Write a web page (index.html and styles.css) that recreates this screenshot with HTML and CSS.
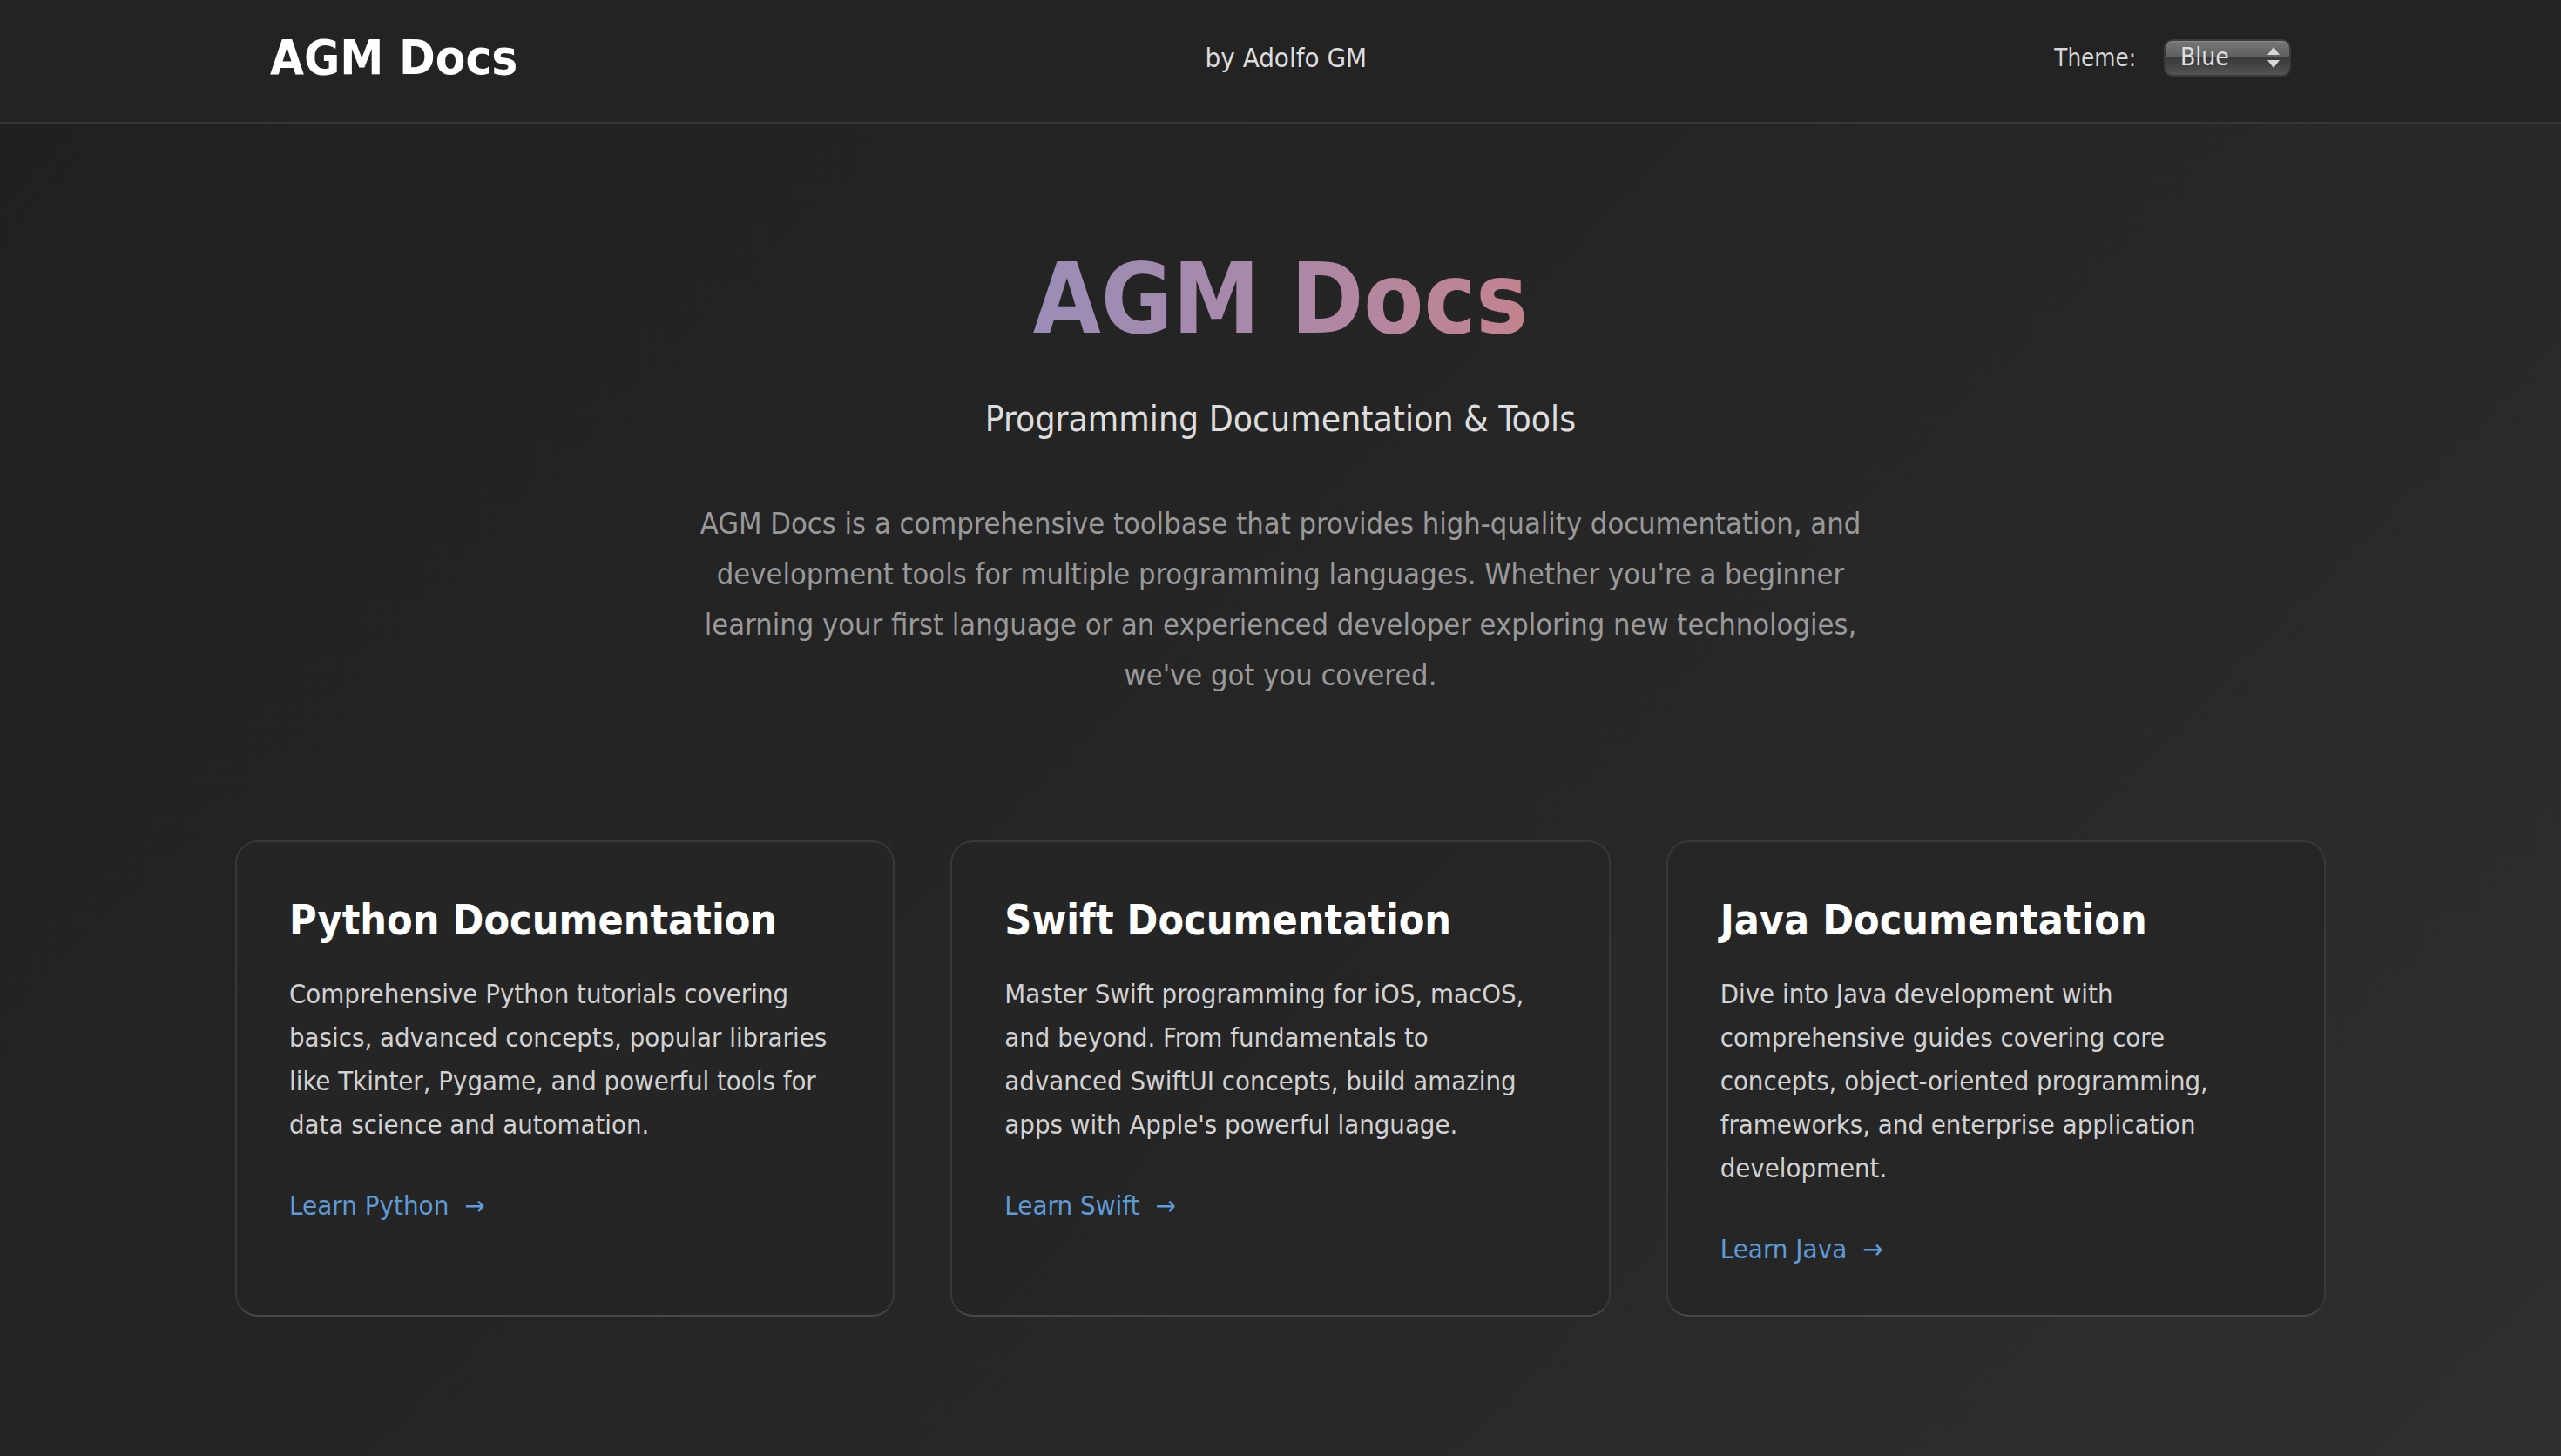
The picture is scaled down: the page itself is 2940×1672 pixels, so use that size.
FILE: index.html
```html
<!DOCTYPE html>
<html lang="en">
<head>
<meta charset="utf-8">
<title>AGM Docs</title>
<link rel="stylesheet" href="styles.css">
</head>
<body>
<header class="site-header">
  <div class="header-inner">
    <div class="logo">AGM Docs</div>
    <div class="byline">by Adolfo GM</div>
    <div class="theme">
      <span class="theme-label">Theme:</span>
      <div class="select">
        <span class="select-value">Blue</span>
        <svg class="select-arrows" width="16" height="26" viewBox="0 0 16 26">
          <path d="M8 1 L15 10 L1 10 Z" fill="#d8d8d8"/>
          <path d="M8 25 L15 16 L1 16 Z" fill="#d8d8d8"/>
        </svg>
      </div>
    </div>
  </div>
</header>

<main class="main">
  <section class="hero">
    <h1 class="hero-title">AGM Docs</h1>
    <p class="hero-subtitle">Programming Documentation &amp; Tools</p>
    <p class="hero-text">AGM Docs is a comprehensive toolbase that provides high-quality documentation, and development tools for multiple programming languages. Whether you're a beginner learning your first language or an experienced developer exploring new technologies, we've got you covered.</p>
  </section>

  <section class="cards">
    <article class="card">
      <h3 class="card-title">Python Documentation</h3>
      <p class="card-text">Comprehensive Python tutorials covering basics, advanced concepts, popular libraries like Tkinter, Pygame, and powerful tools for data science and automation.</p>
      <a class="card-link" href="#">Learn Python<span class="arrow">→</span></a>
    </article>
    <article class="card">
      <h3 class="card-title">Swift Documentation</h3>
      <p class="card-text">Master Swift programming for iOS, macOS, and beyond. From fundamentals to advanced SwiftUI concepts, build amazing apps with Apple's powerful language.</p>
      <a class="card-link" href="#">Learn Swift<span class="arrow">→</span></a>
    </article>
    <article class="card">
      <h3 class="card-title">Java Documentation</h3>
      <p class="card-text">Dive into Java development with comprehensive guides covering core concepts, object-oriented programming, frameworks, and enterprise application development.</p>
      <a class="card-link" href="#">Learn Java<span class="arrow">→</span></a>
    </article>
  </section>
</main>
</body>
</html>
```

FILE: styles.css
```css
* {
  box-sizing: border-box;
}

html, body {
  margin: 0;
  padding: 0;
}

body {
  min-height: 100vh;
  font-family: "DejaVu Sans Condensed", "DejaVu Sans", sans-serif;
  color: #dddddd;
  background: linear-gradient(135deg, #202020 0%, #252525 45%, #2a2a2b 75%, #2f2f31 100%);
}

/* Header */
.site-header {
  background: #232323;
  border-bottom: 2px solid #38383c;
}

.header-inner {
  max-width: 2400px;
  margin: 0 auto;
  padding: 0 40px 8px;
  height: 140px;
  display: flex;
  align-items: center;
  justify-content: space-between;
}

.logo {
  font-size: 56px;
  font-weight: bold;
  color: #ffffff;
  line-height: 1;
}

.byline {
  font-size: 31px;
  color: #dcdcdc;
}

.theme {
  display: flex;
  align-items: center;
  gap: 32px;
}

.theme-label {
  font-size: 27.5px;
  color: #d6d6d6;
}

.select {
  width: 146px;
  height: 43px;
  border-radius: 10px;
  border: 2px solid #3a3a3e;
  background: linear-gradient(180deg, #777777 0%, #5f5f5f 46%, #3a3a3a 50%, #434343 70%, #555555 100%);
  box-shadow: inset 0 1px 0 rgba(255,255,255,0.15);
  display: flex;
  align-items: center;
  justify-content: space-between;
  padding: 0 10px 0 17px;
}

.select-value {
  font-size: 28px;
  color: #dedede;
  line-height: 1;
}

.select-arrows {
  display: block;
}

/* Hero */
.main {
  max-width: 2400px;
  margin: 0 auto;
}

.hero {
  text-align: center;
  padding-top: 134px;
}

.hero-title {
  margin: 0 0 39px;
  font-size: 112px;
  line-height: 1.2;
  font-weight: bold;
  background: linear-gradient(90deg, #9a8db6 0%, #aa88a8 50%, #c3838f 100%);
  -webkit-background-clip: text;
  background-clip: text;
  color: transparent;
  display: inline-block;
}

.hero-subtitle {
  margin: 0;
  font-size: 40.5px;
  line-height: 64px;
  color: #dddddd;
}

.hero-text {
  margin: 59px auto 0;
  max-width: 1400px;
  font-size: 34.2px;
  line-height: 58px;
  color: #999999;
}

/* Cards */
.cards {
  margin-top: 161px;
  display: grid;
  grid-template-columns: repeat(3, 1fr);
  gap: 64px;
  padding-bottom: 100px;
}

.card {
  background: rgba(38, 38, 38, 0.9);
  border: 2px solid #38383c;
  border-bottom-color: #47474c;
  border-radius: 26px;
  padding: 61px 66px 51px 60px;
}

.card-title {
  margin: 0 0 32px;
  font-size: 48px;
  font-weight: bold;
  color: #ffffff;
  line-height: normal;
}

.card-text {
  margin: 0 0 43px;
  font-size: 30.8px;
  line-height: 50px;
  color: #d2d2d2;
}

.card-link {
  display: block;
  font-size: 31px;
  line-height: 50px;
  color: #5f9bd6;
  text-decoration: none;
}

.arrow {
  margin-left: 18px;
}
```
